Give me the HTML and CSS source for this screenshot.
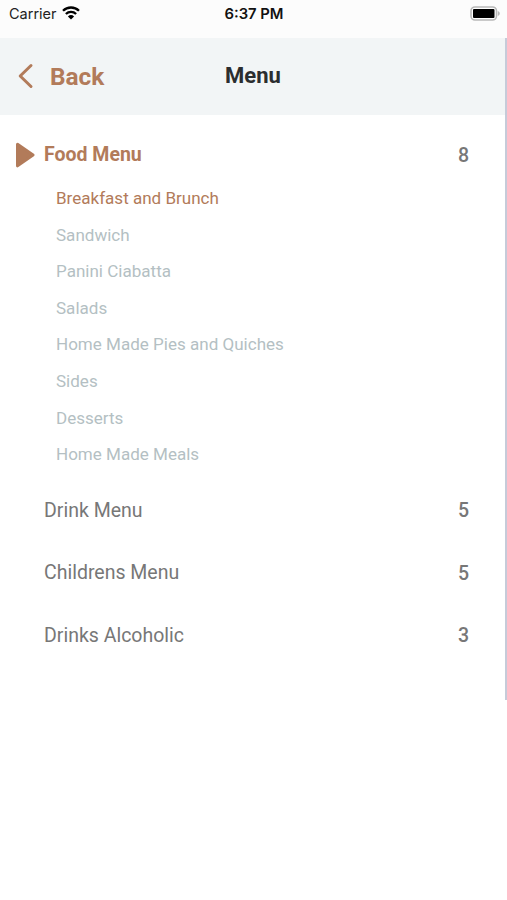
FILE: index.html
```
<!DOCTYPE html>
<html lang="en">
<head>
    <meta charset="UTF-8">
    <meta name="viewport" content="width=device-width, initial-scale=1.0">
    <title>Menu</title>
    <link rel="stylesheet" href="styles.css">
</head>
<body>
    <div class="screen">
        <div class="status-bar">
            <div class="carrier">
                <span>Carrier</span>
                <svg class="wifi" width="18" height="14" viewBox="0 0 18 14">
                    <path d="M1 4.8a11.4 11.4 0 0 1 16 0M3.9 8a7.2 7.2 0 0 1 10.2 0" fill="none" stroke="#000" stroke-width="2.3"/>
                    <path d="M9 13.6L5.9 10.5a4.5 4.5 0 0 1 6.2 0z" fill="#000"/>
                </svg>
            </div>
            <div class="clock">6:37 PM</div>
            <svg class="battery" width="31" height="15" viewBox="0 0 31 15">
                <rect x="1" y="1" width="25.5" height="13" rx="4" fill="#fff" stroke="#b8b8b8" stroke-width="1.6"/>
                <rect x="3" y="3" width="21.5" height="9" rx="1" fill="#000"/>
                <path d="M27.8 5v5c2.6-.8 2.6-4.2 0-5z" fill="#b8b8b8"/>
            </svg>
        </div>
        <header class="header">
            <a class="back">
                <svg width="16" height="26" viewBox="0 0 16 26">
                    <path d="M13 2.5L2.2 13 13 23.5" fill="none" stroke="#b27b5a" stroke-width="3" stroke-linecap="round" stroke-linejoin="round"/>
                </svg>
                <span>Back</span>
            </a>
            <h1 class="title">Menu</h1>
        </header>
        <main class="menu">
            <div class="menu-row active">
                <svg class="arrow" width="20" height="26" viewBox="0 0 20 26">
                    <path d="M2.5 2.2L18 13 2.5 23.8z" fill="#b27b5a" stroke="#b27b5a" stroke-width="3" stroke-linejoin="round"/>
                </svg>
                <span class="name">Food Menu</span>
                <span class="count">8</span>
            </div>
            <ul class="submenu">
                <li class="selected">Breakfast and Brunch</li>
                <li>Sandwich</li>
                <li>Panini Ciabatta</li>
                <li>Salads</li>
                <li>Home Made Pies and Quiches</li>
                <li>Sides</li>
                <li>Desserts</li>
                <li>Home Made Meals</li>
            </ul>
            <div class="menu-row"><span class="name">Drink Menu</span><span class="count">5</span></div>
            <div class="menu-row"><span class="name">Childrens Menu</span><span class="count">5</span></div>
            <div class="menu-row"><span class="name">Drinks Alcoholic</span><span class="count">3</span></div>
        </main>
    </div>
</body>
</html>
```
FILE: styles.css
```
* {
    box-sizing: border-box;
}

body {
    margin: 0;
    background: #fff;
    font-family: Roboto, sans-serif;
}

.screen {
    width: 507px;
    height: 900px;
    overflow: hidden;
}

.status-bar {
    display: grid;
    grid-template-columns: 1fr auto 1fr;
    align-items: center;
    height: 38px;
    padding: 0 6px 11px 9px;
    background: #fcfcfc;
    font-family: Inter, sans-serif;
    font-size: 14.5px;
    color: #222;
}

.carrier {
    display: flex;
    align-items: center;
    gap: 5px;
}

.wifi {
    margin-bottom: 2px;
}

.clock {
    margin-right: 2px;
    font-size: 14.8px;
    font-weight: 600;
    color: #111;
}

.battery {
    justify-self: end;
    margin-bottom: 1px;
}

.header {
    display: grid;
    grid-template-columns: 1fr auto 1fr;
    align-items: center;
    height: 77px;
    padding: 0 17px 0 18px;
    background: #f2f5f6;
    border-right: 2px solid #c6cbd9;
}

.back {
    display: flex;
    align-items: center;
    gap: 16px;
    margin-bottom: 1px;
    font-size: 24.4px;
    font-weight: 700;
    color: #b27b5a;
}

.title {
    margin: 0 0 3px;
    font-size: 22px;
    font-weight: 700;
    color: #2b2d2f;
}

.menu {
    height: 585px;
    padding-top: 15px;
    border-right: 2px solid #c6cbd9;
}

.menu-row {
    display: flex;
    align-items: center;
    height: 62.4px;
    padding: 0 36px 0 44px;
    font-size: 19.5px;
    color: #777;
}

.menu-row.active {
    height: 50px;
    padding-left: 15px;
    gap: 9px;
}

.name {
    margin-bottom: 1px;
}

.active .name {
    font-weight: 700;
    color: #b27b5a;
}

.count {
    margin-left: auto;
    font-weight: 500;
}

.submenu {
    margin: 0;
    padding: 0 0 7px 56px;
    list-style: none;
    font-size: 17.05px;
    line-height: 36.6px;
    color: #b4bfc3;
}

.submenu .selected {
    color: #b27b5a;
}
```
